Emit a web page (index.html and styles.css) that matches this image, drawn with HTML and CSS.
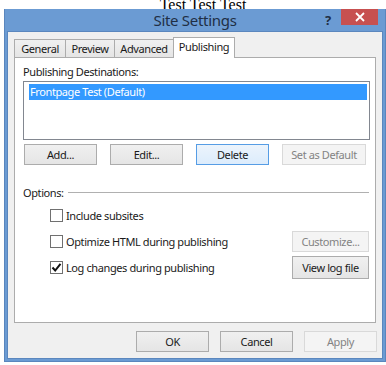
FILE: index.html
```html
<!DOCTYPE html>
<html>
<head>
<meta charset="utf-8">
<link rel="stylesheet" href="styles.css">
</head>
<body>
<div class="page-text">Test Test Test</div>
<div class="window">
  <div class="titlebar">
    <div class="title">Site Settings</div>
    <div class="help">?</div>
    <div class="close"><svg width="10" height="10" viewBox="0 0 10 10"><path d="M1 1L9 9M9 1L1 9" stroke="#fff" stroke-width="1.8"/></svg></div>
  </div>
  <div class="content">
    <div class="tabs">
      <div class="tab t1">General</div>
      <div class="tab t2">Preview</div>
      <div class="tab t3">Advanced</div>
      <div class="tab t4 active">Publishing</div>
    </div>
    <div class="panel">
      <div class="label">Publishing Destinations:</div>
      <div class="listbox">
        <div class="item selected">Frontpage Test (Default)</div>
      </div>
      <div class="btnrow">
        <div class="btn w73">Add...</div>
        <div class="btn w73">Edit...</div>
        <div class="btn w73 focus">Delete</div>
        <div class="btn w84 disabled">Set as Default</div>
      </div>
      <div class="group">
        <span class="group-label">Options:</span>
        <span class="group-line"></span>
      </div>
      <div class="options">
        <div class="optrow">
          <div class="check"><span class="box"></span>Include subsites</div>
        </div>
        <div class="optrow">
          <div class="check"><span class="box"></span>Optimize HTML during publishing</div>
          <div class="btn w77 disabled">Customize...</div>
        </div>
        <div class="optrow">
          <div class="check"><span class="box checked"><svg width="11" height="11" viewBox="0 0 11 11"><path d="M1.5 5.5L4.2 8.5L9.5 1.8" fill="none" stroke="#111" stroke-width="2"/></svg></span>Log changes during publishing</div>
          <div class="btn w77 tall">View log file</div>
        </div>
      </div>
    </div>
    <div class="footer">
      <div class="btn w73">OK</div>
      <div class="btn w73">Cancel</div>
      <div class="btn w73 disabled">Apply</div>
    </div>
  </div>
</div>
</body>
</html>
```
FILE: styles.css
```css
html, body {
  margin: 0;
  padding: 0;
  background: #fff;
  width: 386px;
  height: 365px;
  overflow: hidden;
}
.page-text {
  font-family: "Liberation Serif", serif;
  font-size: 16px;
  line-height: 18px;
  padding-left: 20px;
  text-align: center;
  margin-top: -4px;
  color: #000;
}
.window {
  position: absolute;
  left: 4px;
  top: 9px;
  width: 382px;
  height: 353px;
  box-sizing: border-box;
  background: #6b9bd3;
  border: 1px solid #5a86bd;
  border-top: none;
  padding: 0 2px 2px 2px;
  display: flex;
  flex-direction: column;
  font-family: "Noto Sans", sans-serif;
  font-size: 11px;
  letter-spacing: -0.4px;
  color: #1a1a1a;
}
.titlebar {
  height: 22px;
  flex: none;
  position: relative;
}
.title {
  text-align: center;
  font-size: 15px;
  letter-spacing: -0.3px;
  line-height: 20px;
  color: #1f2f45;
  padding-top: 1px;
}
.help {
  position: absolute;
  left: 318px;
  top: 2px;
  font-weight: bold;
  font-size: 13px;
  color: #1f2f45;
}
.close {
  position: absolute;
  left: 334px;
  top: 0;
  width: 37px;
  height: 16px;
  background: #c75050;
  display: flex;
  align-items: center;
  justify-content: center;
}
.content {
  flex: 1;
  background: #f0f0f0;
  border: 1px solid #5b87be;
  display: flex;
  flex-direction: column;
  padding: 5px 5px 0 6px;
}
.tabs {
  display: flex;
  align-items: flex-end;
  height: 20px;
  position: relative;
  z-index: 1;
}
.tab {
  box-sizing: border-box;
  height: 18px;
  border: 1px solid #acacac;
  border-bottom: none;
  border-right: none;
  background: linear-gradient(#f0f0f0, #e5e5e5);
  text-align: center;
  line-height: 17px;
}
.t1 { width: 51px; }
.t2 { width: 49px; }
.t3 { width: 59px; }
.t4 { width: 62px; }
.tab.active {
  height: 21px;
  background: #fff;
  border-right: 1px solid #acacac;
  margin-bottom: -1px;
  line-height: 18px;
}
.panel {
  box-sizing: border-box;
  width: 362px;
  height: 266px;
  background: #fff;
  border: 1px solid #acacac;
  padding: 6px 6px 0 8px;
  display: flex;
  flex-direction: column;
}
.label {
  line-height: 16px;
  height: 16px;
}
.listbox {
  box-sizing: border-box;
  margin-top: 1px;
  width: 347px;
  height: 59px;
  border: 1px solid #828790;
  padding: 2px 2px 0 5px;
}
.item {
  line-height: 16px;
  padding-left: 1px;
}
.item.selected {
  background: #3399ff;
  color: #fff;
}
.btnrow {
  display: flex;
  gap: 13px;
  margin-top: 4px;
  padding-left: 1px;
}
.btn {
  box-sizing: border-box;
  height: 21px;
  border: 1px solid #acacac;
  background: linear-gradient(#f0f0f0, #e5e5e5);
  text-align: center;
  line-height: 19px;
  white-space: nowrap;
}
.btn.w73 { width: 73px; }
.btn.w84 { width: 84px; }
.btn.w77 { width: 77px; }
.btn.tall { height: 23px; line-height: 21px; }
.btn.focus {
  border-color: #569de5;
  background: linear-gradient(#ecf4fc, #dcecfc);
}
.btn.disabled {
  border-color: #d9d9d9;
  background: #f4f4f4;
  color: #838383;
}
.group {
  display: flex;
  align-items: center;
  margin-top: 19px;
  height: 16px;
  width: 346px;
}
.group-label { margin-right: 4px; }
.group-line {
  flex: 1;
  height: 1px;
  background: #b0b0b0;
}
.options {
  display: flex;
  flex-direction: column;
  padding-left: 27px;
  width: 319px;
  margin-top: 3px;
  gap: 2px;
}
.optrow {
  display: flex;
  justify-content: space-between;
  align-items: center;
  height: 24px;
}
.check {
  display: flex;
  align-items: center;
}
.box {
  box-sizing: border-box;
  width: 13px;
  height: 13px;
  border: 1px solid #707070;
  background: #fff;
  margin-right: 3px;
  display: flex;
  align-items: center;
  justify-content: center;
}
.footer {
  display: flex;
  justify-content: flex-end;
  gap: 11px;
  margin-top: 8px;
}
```
